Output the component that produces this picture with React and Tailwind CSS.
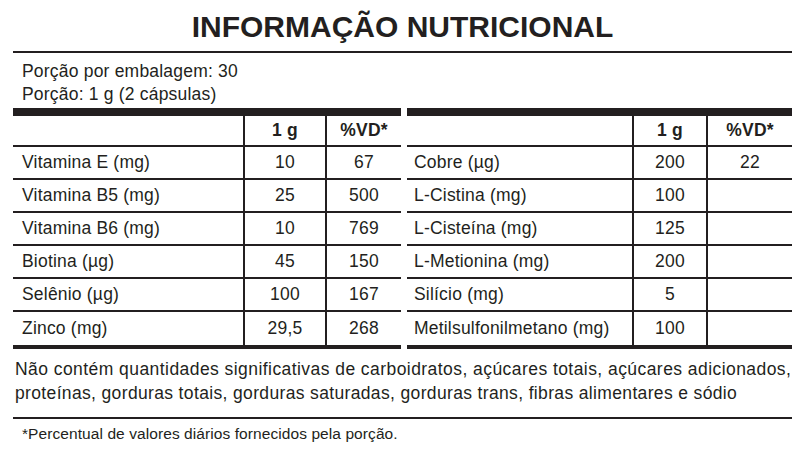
const LEFT_ROWS = [
  ["Vitamina E (mg)", "10", "67"],
  ["Vitamina B5 (mg)", "25", "500"],
  ["Vitamina B6 (mg)", "10", "769"],
  ["Biotina (µg)", "45", "150"],
  ["Selênio (µg)", "100", "167"],
  ["Zinco (mg)", "29,5", "268"],
];

const RIGHT_ROWS = [
  ["Cobre (µg)", "200", "22"],
  ["L-Cistina (mg)", "100", ""],
  ["L-Cisteína (mg)", "125", ""],
  ["L-Metionina (mg)", "200", ""],
  ["Silício (mg)", "5", ""],
  ["Metilsulfonilmetano (mg)", "100", ""],
];

// one half of the nutrient table; cols is the grid template, pad the name indent
const NutrientTable = ({ rows, cols, pad, width }) => (
  <div className={`${width} border-t-[8px] border-b-4 border-[#231f20]`}>
    <div className={`grid ${cols} h-[31px] border-b-2 border-[#231f20] font-bold`}>
      <div></div>
      <div className="border-l-2 border-[#231f20] flex items-center justify-center pb-[1px]">1 g</div>
      <div className="border-l-2 border-[#231f20] flex items-center justify-center pb-[1px]">%VD*</div>
    </div>
    {rows.map((r, i) => (
      <div
        key={r[0]}
        className={`grid ${cols} h-[33px] ${
          i < rows.length - 1 ? "border-b-2 border-[#231f20]" : ""
        }`}
      >
        <div className={`flex items-center ${pad} whitespace-nowrap`}>{r[0]}</div>
        <div className="border-l-2 border-[#231f20] flex items-center justify-center">{r[1]}</div>
        <div className="border-l-2 border-[#231f20] flex items-center justify-center">{r[2]}</div>
      </div>
    ))}
  </div>
);

export default function App() {
  return (
    <div className="w-[808px] h-[449px] bg-white text-[#231f20] font-['Liberation_Sans',Arial,sans-serif] overflow-hidden">
      <div className="mx-[13px] w-[779px]">
        {/* title */}
        <div className="h-[51px] pt-[12px] text-center text-[30px] leading-[30px] font-bold">
          INFORMAÇÃO NUTRICIONAL
        </div>

        <div className="border-t-2 border-[#231f20] pt-[7px] pl-[9px] text-[17.5px] leading-[22.5px] tracking-[0.2px]">
          <p>Porção por embalagem: 30</p>
          <p>Porção: 1 g (2 cápsulas)</p>
        </div>

        {/* TABLES */}
        <div className="mt-[3px] flex gap-[6px] text-[17.5px] tracking-[0.2px]">
          <NutrientTable
            rows={LEFT_ROWS}
            width="w-[388px]"
            cols="grid-cols-[230px_82px_76px]"
            pad="pl-[9px]"
          />
          <NutrientTable
            rows={RIGHT_ROWS}
            width="w-[385px]"
            cols="grid-cols-[225px_74px_86px]"
            pad="pl-[7px]"
          />
        </div>

        <div className="pt-[8px] pb-[12px] pl-[2px] text-[17.5px] leading-[24px] whitespace-nowrap border-b-2 border-[#231f20]">
          <p className="tracking-[0.44px]">
            Não contém quantidades significativas de carboidratos, açúcares totais, açúcares adicionados,
          </p>
          <p className="tracking-[0.35px]">
            proteínas, gorduras totais, gorduras saturadas, gorduras trans, fibras alimentares e sódio
          </p>
        </div>

        <p className="pt-[5px] pl-[9px] text-[15.5px] leading-[20px] tracking-[0.08px]">
          *Percentual de valores diários fornecidos pela porção.
        </p>
      </div>
    </div>
  );
}
